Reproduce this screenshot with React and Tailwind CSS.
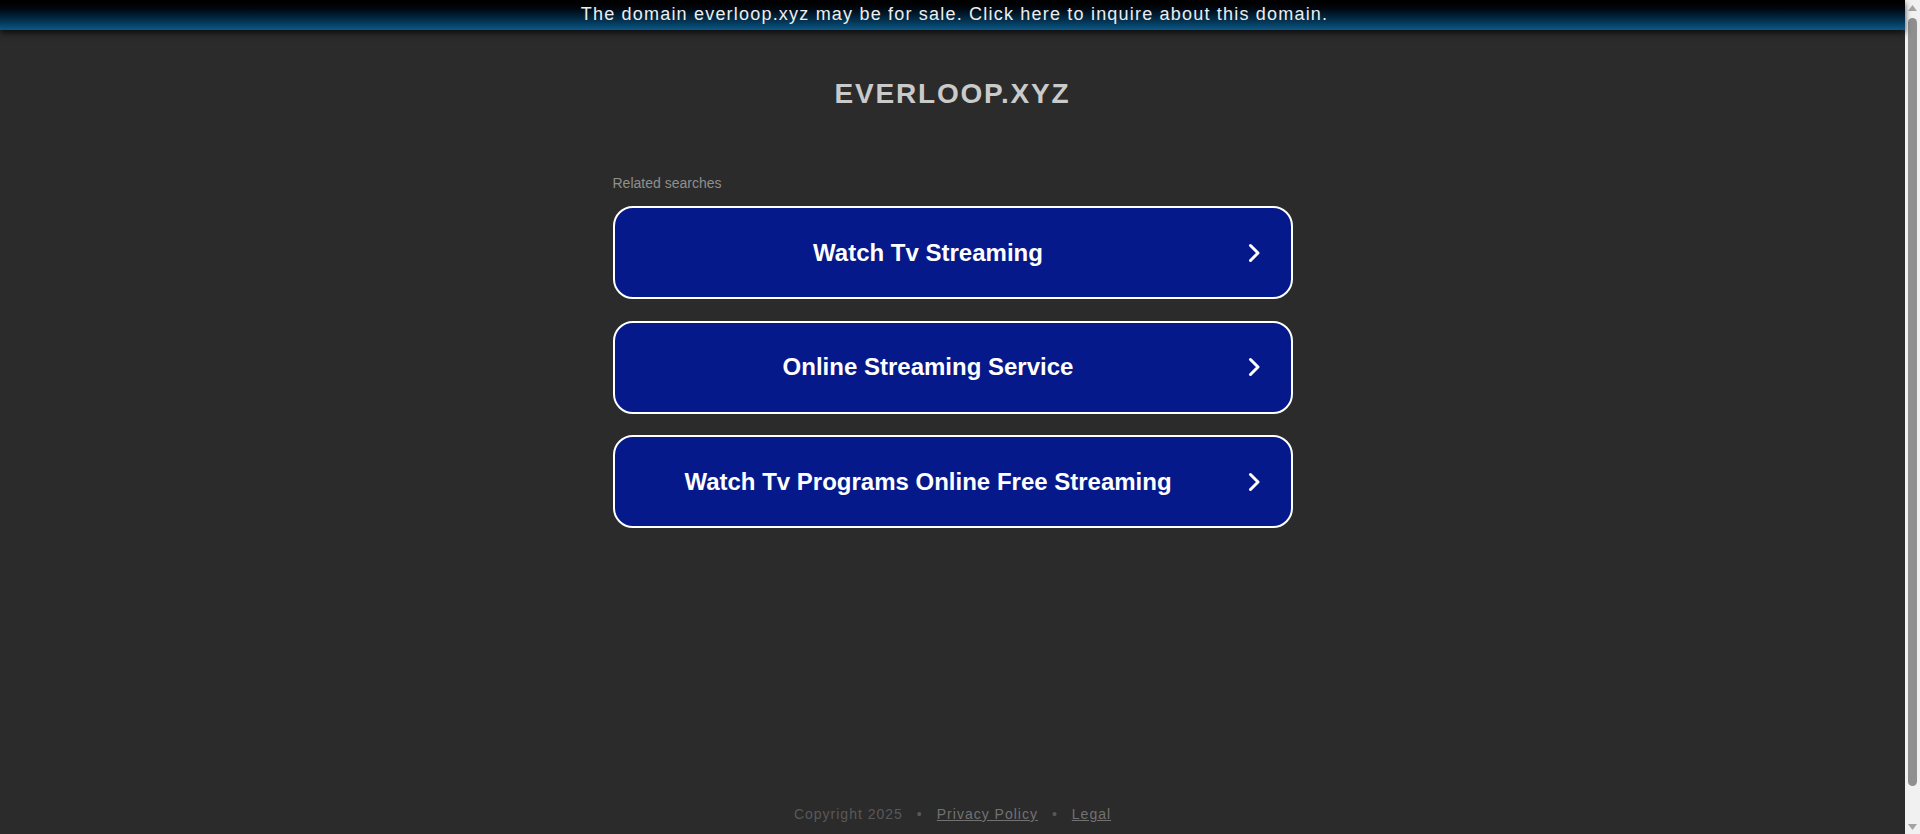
import React from "react";

const searches = [
  "Watch Tv Streaming",
  "Online Streaming Service",
  "Watch Tv Programs Online Free Streaming",
];

function Chevron() {
  return (
    <svg width="12" height="20" viewBox="0 0 12 20" fill="none">
      <path
        d="M2.5 2.5 L10 10 L2.5 17.5"
        stroke="#ffffff"
        strokeWidth="3"
        strokeLinecap="round"
        strokeLinejoin="round"
      />
    </svg>
  );
}

function Scrollbar() {
  return (
    <div className="w-[15px] h-full flex flex-col items-center bg-[#f1f1f1]">
      <div className="h-[15px] flex items-center justify-center">
        <svg width="9" height="6" viewBox="0 0 9 6">
          <path d="M4.5 0 L9 6 L0 6 Z" fill="#a3a3a3" />
        </svg>
      </div>
      <div className="mt-[3px] w-[9px] h-[768px] rounded-full bg-[#8f8f8f]" />
      <div className="flex-1" />
      <div className="h-[15px] flex items-center justify-center">
        <svg width="9" height="6" viewBox="0 0 9 6">
          <path d="M0 0 L9 0 L4.5 6 Z" fill="#a3a3a3" />
        </svg>
      </div>
    </div>
  );
}

export default function App() {
  return (
    <div
      className="h-[834px] overflow-hidden flex bg-[#2b2b2b]"
      style={{ fontFamily: '"Liberation Sans", Arial, sans-serif' }}
    >
      <div className="flex-1 flex flex-col">
        <div className="relative z-10 h-[30px] pb-[2px] pl-[4px] flex items-center justify-center bg-gradient-to-b from-[#000000] to-[#0b5888] shadow-[0_3px_6px_rgba(0,0,0,0.7)]">
          <span className="text-[18px] leading-[28px] tracking-[1.2px] text-[#eeeeee]">
            The domain everloop.xyz may be for sale. Click here to inquire about this domain.
          </span>
        </div>

        <div className="flex flex-col items-center">
          <h1 className="mt-[48px] text-[28px] leading-[32px] font-bold tracking-[1.8px] text-[#cacaca]">
            EVERLOOP.XYZ
          </h1>

          <div className="w-[680px] mt-[63px]">
            <div className="text-[14px] leading-[20px] text-[#8f8f8f]">Related searches</div>
            <div className="mt-[13px] flex flex-col gap-[21.5px]">
              {searches.map((s) => (
                <div
                  key={s}
                  className="h-[93px] flex items-center rounded-[20px] border-2 border-white bg-[#05198a]"
                >
                  <div className="flex-1 text-center text-[24px] font-bold text-white">{s}</div>
                  <div className="w-[49px] pl-[6px] flex items-center">
                    <Chevron />
                  </div>
                </div>
              ))}
            </div>
          </div>
        </div>

        <div className="mt-auto pb-[10px] flex items-center justify-center text-[14px] leading-[20px] tracking-[1px]">
          <span className="text-[#595959]">Copyright 2025</span>
          <span className="mx-[14px] text-[#595959]">•</span>
          <span className="text-[#727272] underline">Privacy Policy</span>
          <span className="mx-[14px] text-[#595959]">•</span>
          <span className="text-[#727272] underline">Legal</span>
        </div>
      </div>
      <Scrollbar />
    </div>
  );
}
